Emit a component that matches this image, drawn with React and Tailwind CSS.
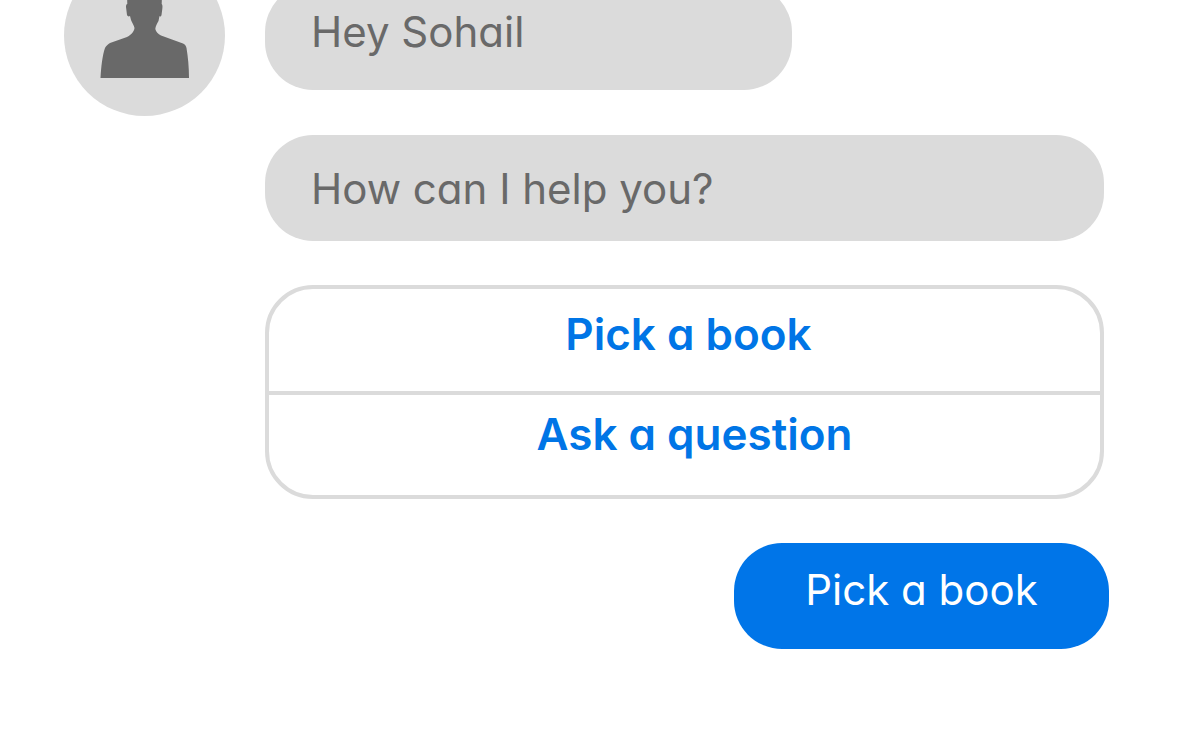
const textFont = "font-['Inter',sans-serif] [font-feature-settings:'cv11'] leading-[60px]";

const options = [
  { label: 'Pick a book', className: 'h-[102px] pt-[15px] pl-2' },
  { label: 'Ask a question', className: 'h-[104px] border-t-4 border-[#dbdbdb] pt-[9px] pl-5' },
];

function Avatar() {
  return (
    <div className="size-[161px] shrink-0 overflow-hidden rounded-full bg-[#dbdbdb]">
      <svg viewBox="0 0 161 161" className="size-full" role="img" aria-label="Bot">
        <path
          fill="#696969"
          d="M36.5 123 C37 112 38.5 100 41 93 C42 90.5 44 89.500 46 88 L63 82 C67 80 70 77 70.5 73 C70 70 68 68 67 65 L66 61 C64.500 62 63.500 61 63 60 L62 52 C62 50 62.500 49 63.300 49 L63 40 C63 26 70 18 80.500 18 C91 18 98 26 98 40 L97.700 49 C98.700 50 98.500 52 98.300 54 L97.500 60 C97 61.500 96.500 62 95.500 61 L94.500 66 C93 69 91.500 71 91.300 74 C92 77 94 79 97 80.500 L119 88.500 C121 89.500 122 90.500 122.500 93 C124 102 125 112 125 123 Z"
        />
      </svg>
    </div>
  );
}

function Bubble({ children, className }) {
  return (
    <p className={`h-[106px] max-w-full rounded-[48px] bg-[#dbdbdb] px-[46px] text-[42px] text-[#696969] ${textFont} ${className}`}>
      {children}
    </p>
  );
}

export default function App() {
  return (
    <main className="min-h-screen overflow-hidden bg-white">
      {/* The conversation is scrolled, so its first row runs off the top */}
      <div className="-mt-[45px]">
        <div className="flex items-start gap-10 pr-24 pl-16">
          <Avatar />
          <div className="min-w-0 flex-1 pt-[29px]">
            <Bubble className="w-[527px] pt-[18px]">Hey Sohail</Bubble>
            <Bubble className="mt-[45px] w-full pt-6">How can I help you?</Bubble>
            <div className="mt-11 overflow-hidden rounded-[48px] border-4 border-[#dbdbdb]">
              {options.map((option) => (
                <button
                  key={option.label}
                  type="button"
                  className={`flex w-full items-start justify-center text-[44px] font-semibold text-[#0075e6] ${textFont} ${option.className}`}
                >
                  {option.label}
                </button>
              ))}
            </div>
          </div>
        </div>

        <div className="mt-11 flex justify-end pr-[91px]">
          <p className={`h-[106px] w-[375px] rounded-[48px] bg-[#0075e8] pt-[17px] text-center text-[42px] text-white ${textFont}`}>
            Pick a book
          </p>
        </div>
      </div>
    </main>
  );
}
